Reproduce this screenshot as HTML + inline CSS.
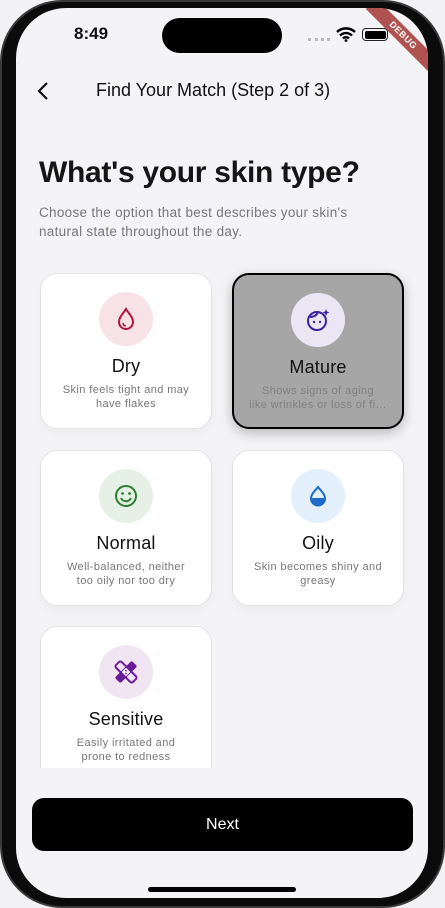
<!DOCTYPE html>
<html><head><meta charset="utf-8"><style>
*{margin:0;padding:0;box-sizing:border-box}
body{width:445px;height:908px;background:#f2f2f4;position:relative;overflow:hidden;font-family:"Liberation Sans",sans-serif}
.phone{position:absolute;left:0;top:0;width:445px;height:908px;background:#0b0b0b;border-radius:62px;border:2px solid #3a3a3a}
.screen{position:absolute;left:16px;top:8px;width:412px;height:890px;background:#f4f4f6;border-radius:50px;overflow:hidden}
.island{position:absolute;left:146px;top:10px;width:120px;height:35px;background:#000;border-radius:18px}
.time{position:absolute;left:58px;top:16px;font-size:17px;font-weight:bold;color:#111}
.card{position:absolute;width:172px;height:156px;background:#fff;border:1px solid #e2e2e4;border-radius:17px;text-align:center;box-shadow:0 4px 10px rgba(0,0,0,.04)}
.ic{width:54px;height:54px;border-radius:50%;margin:18px auto 0;display:flex;align-items:center;justify-content:center}
.t{font-size:18px;color:#111;margin-top:10px;letter-spacing:.2px}
.d{font-size:11px;color:#777;line-height:13.5px;margin-top:7px;padding:0 20px;letter-spacing:.4px}
.sel{background:#a6a6a6;border:2px solid #000;box-shadow:0 4px 12px rgba(0,0,0,.25)}
.sel .d{color:#808080}
</style></head><body>
<div class="phone"></div>
<div class="screen">
 <div class="island"></div>
 <div class="time">8:49</div>
 <div style="position:absolute;left:292px;top:30px;width:22px;height:3px;border-top:3px dotted #bbb"></div>
 <svg style="position:absolute;left:320px;top:19px" width="20" height="15" viewBox="0 0 20 15"><path d="M1 5a13 13 0 0 1 18 0M4 8.5a8.5 8.5 0 0 1 12 0M7 11.5a4 4 0 0 1 6 0" stroke="#000" stroke-width="2.4" fill="none"/><circle cx="10" cy="13.5" r="1.4"/></svg>
 <div style="position:absolute;left:346px;top:20px;width:26px;height:13px;border:1.5px solid #222;border-radius:4px;padding:1.5px"><div style="background:#000;height:100%;border-radius:2px"></div></div>
 <div style="position:absolute;left:342px;top:20px;width:90px;height:15px;background:#b0524f;transform:rotate(45deg);color:#fff;font-size:9px;font-weight:bold;text-align:center;line-height:15px;letter-spacing:.5px">DEBUG</div>
 <svg style="position:absolute;left:20px;top:73px" width="14" height="20" viewBox="0 0 14 20"><path d="M11 2L3 10l8 8" stroke="#111" stroke-width="2.2" fill="none"/></svg>
 <div style="position:absolute;left:80px;top:72px;font-size:18px;color:#111">Find Your Match (Step 2 of 3)</div>
 <div style="position:absolute;left:23px;top:148px;font-size:30px;font-weight:bold;color:#151515;letter-spacing:-.3px">What's your skin type?</div>
 <div style="position:absolute;left:23px;top:195px;font-size:13.5px;color:#777;line-height:19px;letter-spacing:.3px">Choose the option that best describes your skin's<br>natural state throughout the day.</div>

 <div class="card" style="left:24px;top:265px"><div class="ic" style="background:#f7e2e8"><svg width="22" height="24" viewBox="0 0 22 24"><path d="M11 2C8 7 4 10 4 15a7 7 0 0 0 14 0c0-5-4-8-7-13z" stroke="#b3123f" stroke-width="2" fill="none"/><path d="M8 16a3 3 0 0 0 3 3" stroke="#b3123f" stroke-width="1.6" fill="none"/></svg></div><div class="t">Dry</div><div class="d">Skin feels tight and may have flakes</div></div>
 <div class="card sel" style="left:216px;top:265px"><div class="ic" style="background:#ebe6f4"><svg width="26" height="26" viewBox="0 0 26 26"><circle cx="12" cy="14" r="9" stroke="#3a23a0" stroke-width="2" fill="none"/><path d="M5 10c4 0 7-2 8-5" stroke="#3a23a0" stroke-width="2" fill="none"/><circle cx="9" cy="15" r="1.2" fill="#3a23a0"/><circle cx="15" cy="15" r="1.2" fill="#3a23a0"/><path d="M21 2l1 2.5 2.5 1-2.5 1-1 2.5-1-2.5-2.5-1 2.5-1z" fill="#3a23a0"/></svg></div><div class="t">Mature</div><div class="d" style="white-space:nowrap;overflow:hidden;padding:0 12px">Shows signs of aging<br>like wrinkles or loss of fi…</div></div>
 <div class="card" style="left:24px;top:442px"><div class="ic" style="background:#e6f1e6"><svg width="24" height="24" viewBox="0 0 24 24"><circle cx="12" cy="12" r="10" stroke="#2e7d32" stroke-width="2" fill="none"/><circle cx="8.5" cy="9.5" r="1.4" fill="#2e7d32"/><circle cx="15.5" cy="9.5" r="1.4" fill="#2e7d32"/><path d="M7 14a5.5 5.5 0 0 0 10 0" stroke="#2e7d32" stroke-width="2" fill="none"/></svg></div><div class="t">Normal</div><div class="d">Well-balanced, neither<br>too oily nor too dry</div></div>
 <div class="card" style="left:216px;top:442px"><div class="ic" style="background:#e3effb"><svg width="20" height="22" viewBox="0 0 20 22"><path d="M10 2C7 6 3 9 3 13.5a7 7 0 0 0 14 0C17 9 13 6 10 2z" stroke="#1e6bc8" stroke-width="2" fill="none"/><path d="M3 13h14a7 7 0 0 1-14 0z" fill="#1e6bc8"/></svg></div><div class="t">Oily</div><div class="d">Skin becomes shiny and<br>greasy</div></div>
 <div style="position:absolute;left:24px;top:618px;width:172px;height:142px;overflow:hidden"><div class="card" style="left:0;top:0"><div class="ic" style="background:#f1e4f3"><svg width="26" height="26" viewBox="0 0 26 26"><g transform="rotate(45 13 13)" fill="#6a1b9a"><rect x="9" y="1" width="8" height="24" rx="2"/><rect x="1" y="9" width="24" height="8" rx="2" fill="none" stroke="#6a1b9a" stroke-width="2"/><rect x="10" y="10" width="6" height="6" fill="#fff"/><circle cx="12" cy="12" r=".9"/><circle cx="14" cy="14" r=".9"/></g></svg></div><div class="t">Sensitive</div><div class="d">Easily irritated and<br>prone to redness</div></div></div>

 <div style="position:absolute;left:16px;top:790px;width:381px;height:53px;background:#000;border-radius:12px;color:#fff;font-size:16px;text-align:center;line-height:53px">Next</div>
 <div style="position:absolute;left:132px;top:879px;width:148px;height:5px;background:#000;border-radius:3px"></div>
</div>
</body></html>
